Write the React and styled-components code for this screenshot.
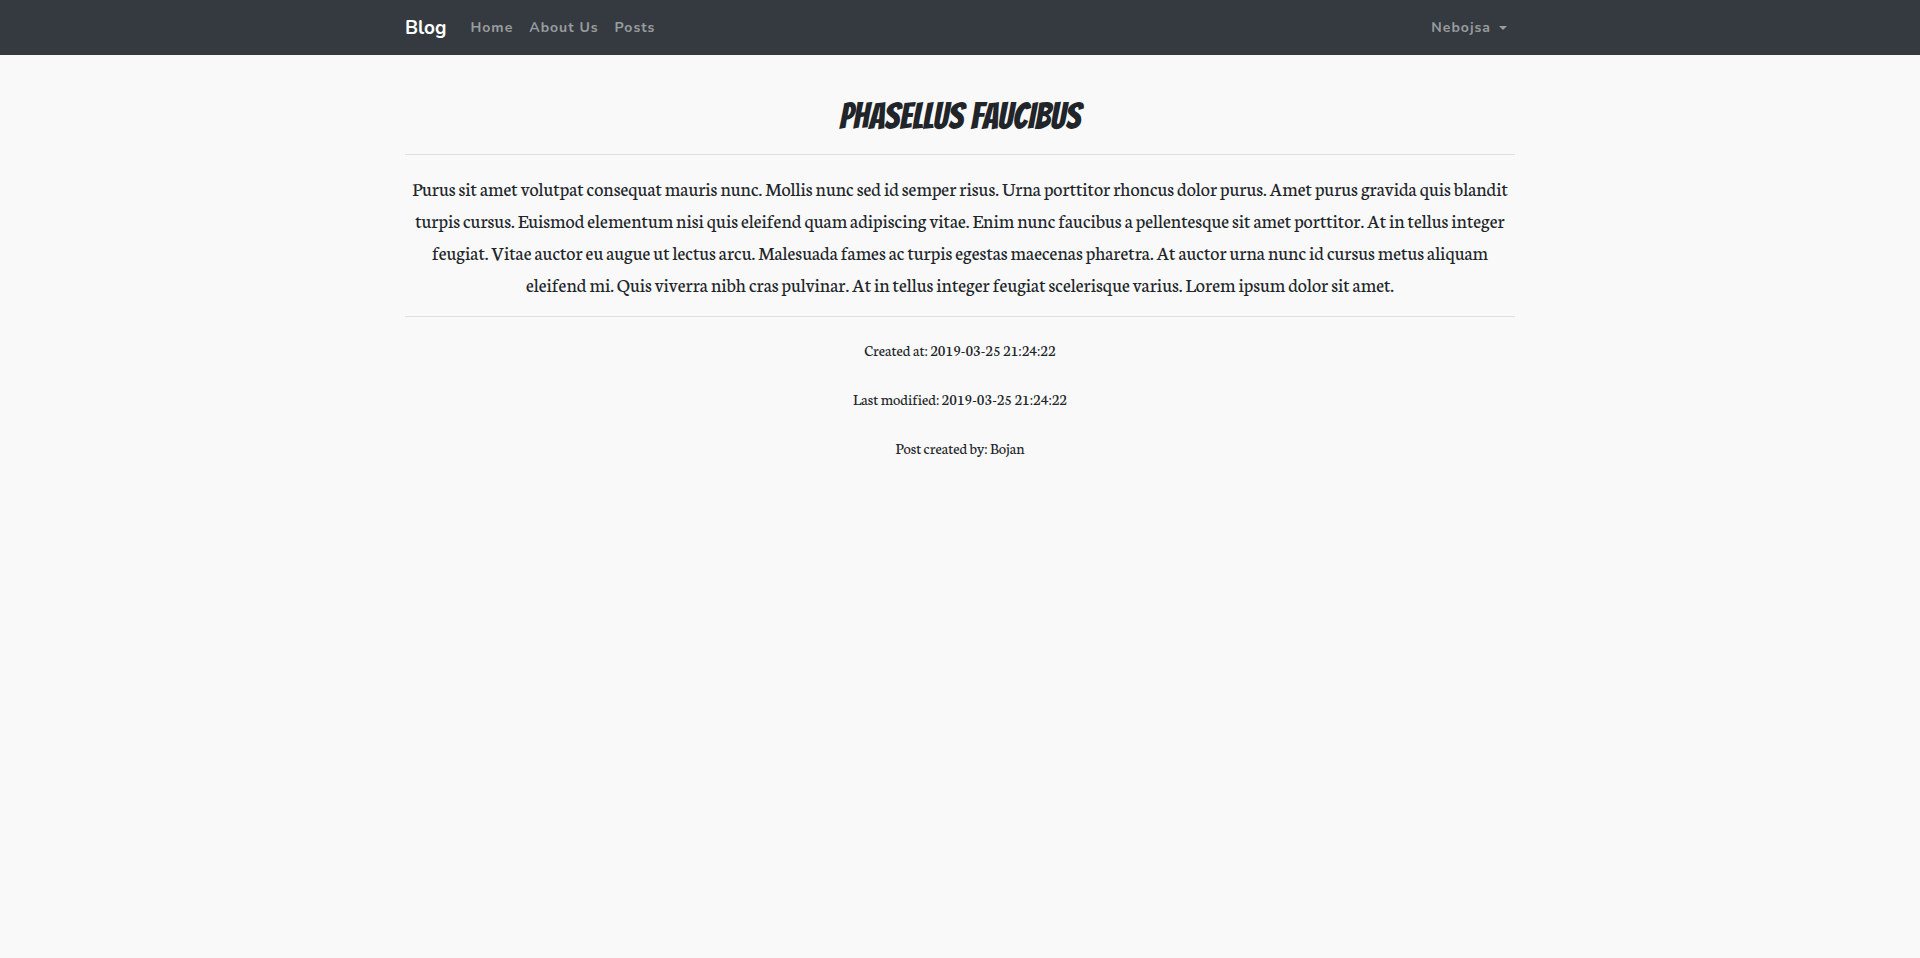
import React from 'react';
import styled, { createGlobalStyle } from 'styled-components';

const GlobalStyle = createGlobalStyle`
  *, *::before, *::after { box-sizing: border-box; }
  body {
    margin: 0;
    background: #f9f9f9;
    color: #212529;
    font-family: Neuton, "Liberation Serif", serif;
    font-size: 16px;
    line-height: 32px;
  }
`;

const Container = styled.div`
  width: 100%;
  max-width: 1140px;
  margin: 0 auto;
  padding: 0 15px;
`;

const Navbar = styled.header`
  background: #343a40;
  font-family: Nunito, Lato, sans-serif;
`;

const NavRow = styled(Container)`
  display: flex;
  align-items: center;
  min-height: 55px;
`;

const Brand = styled.a`
  margin-right: 16px;
  color: #fff;
  font-size: 19px;
  font-weight: 700;
  text-decoration: none;
`;

const NavList = styled.ul`
  display: flex;
  flex: 1;
  margin: 0;
  padding: 0;
  list-style: none;
`;

const NavLink = styled.a`
  display: block;
  padding: 8px;
  color: rgba(255, 255, 255, 0.5);
  font-size: 14px;
  font-weight: 700;
  letter-spacing: 1px;
  line-height: 24px;
  text-decoration: none;
`;

const UserMenu = styled.button`
  display: flex;
  align-items: center;
  gap: 8px;
  padding: 8px;
  border: 0;
  background: none;
  color: rgba(255, 255, 255, 0.5);
  font: 700 14px/24px Nunito, Lato, sans-serif;
  letter-spacing: 1px;
  cursor: pointer;
`;

const Caret = styled.span`
  border-top: 4px solid currentColor;
  border-right: 4px solid transparent;
  border-left: 4px solid transparent;
`;

const Article = styled.article`
  padding-top: 40px;
  text-align: center;
`;

const Title = styled.h1`
  margin: 0;
  font-family: Bangers, "Liberation Sans Narrow", sans-serif;
  font-size: 36px;
  font-weight: 400;
  line-height: 43px;
  text-transform: uppercase;
`;

const Rule = styled.hr`
  margin: 16px 0 17px;
  border: 0;
  border-top: 1px solid #dfdfdf;
`;

const Body = styled.p`
  margin: 0;
  font-size: 20px;
`;

const Meta = styled.p`
  margin: 0 0 17px;
`;

const links = ['Home', 'About Us', 'Posts'];

export default function App() {
  return (
    <>
      <GlobalStyle />
      <Navbar>
        <NavRow as="nav">
          <Brand href="#">Blog</Brand>
          <NavList>
            {links.map((label) => (
              <li key={label}><NavLink href="#">{label}</NavLink></li>
            ))}
          </NavList>
          <UserMenu type="button" aria-haspopup="true">
            Nebojsa
            <Caret />
          </UserMenu>
        </NavRow>
      </Navbar>
      <Container as="main">
        <Article>
          <Title>Phasellus Faucibus</Title>
          <Rule />
          <Body>
            Purus sit amet volutpat consequat mauris nunc. Mollis nunc sed id semper risus. Urna porttitor rhoncus dolor purus. Amet purus gravida quis blandit turpis cursus. Euismod elementum nisi quis eleifend quam adipiscing vitae. Enim nunc faucibus a pellentesque sit amet porttitor. At in tellus integer feugiat. Vitae auctor eu augue ut lectus arcu. Malesuada fames ac turpis egestas maecenas pharetra. At auctor urna nunc id cursus metus aliquam eleifend mi. Quis viverra nibh cras pulvinar. At in tellus integer feugiat scelerisque varius. Lorem ipsum dolor sit amet.
          </Body>
          <Rule />
          <Meta>Created at: 2019-03-25 21:24:22</Meta>
          <Meta>Last modified: 2019-03-25 21:24:22</Meta>
          <Meta>Post created by: Bojan</Meta>
        </Article>
      </Container>
    </>
  );
}
